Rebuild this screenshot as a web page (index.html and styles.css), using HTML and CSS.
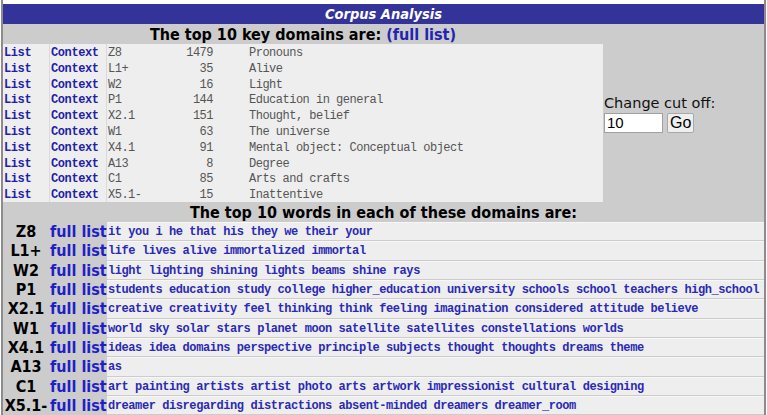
FILE: index.html
```html
<!DOCTYPE html>
<html lang="en">
<head>
<meta charset="utf-8">
<title>Corpus Analysis</title>
<link rel="stylesheet" href="styles.css">
</head>
<body>
<div class="frame">
  <div class="titlebar">Corpus Analysis</div>
  <div class="content">
    <div class="top">
      <div class="domains">
        <div class="heading first">The top 10 key domains are: <a href="#" class="hlink">(full list)</a></div>
        <div class="dtable">
          <a class="lnk c1" href="#">List</a><a class="lnk c2" href="#">Context</a><span class="c3">Z8</span><span class="num">1479</span><span class="desc">Pronouns</span>
          <a class="lnk c1" href="#">List</a><a class="lnk c2" href="#">Context</a><span class="c3">L1+</span><span class="num">35</span><span class="desc">Alive</span>
          <a class="lnk c1" href="#">List</a><a class="lnk c2" href="#">Context</a><span class="c3">W2</span><span class="num">16</span><span class="desc">Light</span>
          <a class="lnk c1" href="#">List</a><a class="lnk c2" href="#">Context</a><span class="c3">P1</span><span class="num">144</span><span class="desc">Education in general</span>
          <a class="lnk c1" href="#">List</a><a class="lnk c2" href="#">Context</a><span class="c3">X2.1</span><span class="num">151</span><span class="desc">Thought, belief</span>
          <a class="lnk c1" href="#">List</a><a class="lnk c2" href="#">Context</a><span class="c3">W1</span><span class="num">63</span><span class="desc">The universe</span>
          <a class="lnk c1" href="#">List</a><a class="lnk c2" href="#">Context</a><span class="c3">X4.1</span><span class="num">91</span><span class="desc">Mental object: Conceptual object</span>
          <a class="lnk c1" href="#">List</a><a class="lnk c2" href="#">Context</a><span class="c3">A13</span><span class="num">8</span><span class="desc">Degree</span>
          <a class="lnk c1" href="#">List</a><a class="lnk c2" href="#">Context</a><span class="c3">C1</span><span class="num">85</span><span class="desc">Arts and crafts</span>
          <a class="lnk c1" href="#">List</a><a class="lnk c2" href="#">Context</a><span class="c3">X5.1-</span><span class="num">15</span><span class="desc">Inattentive</span>
        </div>
      </div>
      <div class="cutoff">
        <form class="cutform">
          <div class="cutlabel">Change cut off:</div>
          <div class="cutrow"><input class="cutinput" type="text" value="10"><button class="gobtn" type="button">Go</button></div>
        </form>
      </div>
    </div>
    <div class="heading wide">The top 10 words in each of these domains are:</div>
    <div class="wtable">
      <span class="code">Z8</span><a class="full" href="#">full list</a><span class="words">it you i he that his they we their your</span>
      <span class="code">L1+</span><a class="full" href="#">full list</a><span class="words">life lives alive immortalized immortal</span>
      <span class="code">W2</span><a class="full" href="#">full list</a><span class="words">light lighting shining lights beams shine rays</span>
      <span class="code">P1</span><a class="full" href="#">full list</a><span class="words">students education study college higher_education university schools school teachers high_school</span>
      <span class="code">X2.1</span><a class="full" href="#">full list</a><span class="words">creative creativity feel thinking think feeling imagination considered attitude believe</span>
      <span class="code">W1</span><a class="full" href="#">full list</a><span class="words">world sky solar stars planet moon satellite satellites constellations worlds</span>
      <span class="code">X4.1</span><a class="full" href="#">full list</a><span class="words">ideas idea domains perspective principle subjects thought thoughts dreams theme</span>
      <span class="code">A13</span><a class="full" href="#">full list</a><span class="words">as</span>
      <span class="code">C1</span><a class="full" href="#">full list</a><span class="words">art painting artists artist photo arts artwork impressionist cultural designing</span>
      <span class="code">X5.1-</span><a class="full" href="#">full list</a><span class="words">dreamer disregarding distractions absent-minded dreamers dreamer_room</span>
    </div>
  </div>
</div>
</body>
</html>
```

FILE: styles.css
```css
html, body {
  margin: 0;
  padding: 0;
  background: #ffffff;
}

body {
  font-family: "DejaVu Sans Condensed", "DejaVu Sans", sans-serif;
  color: #000;
}

a {
  text-decoration: none;
}

.frame {
  margin: 0 1px;
  padding-top: 4px;
  border-left: 2px solid #8c8c8c;
  border-right: 2px solid #8c8c8c;
  height: 411px;
  overflow: hidden;
}

.titlebar {
  height: 20px;
  line-height: 21px;
  background: #333399;
  color: #ffffff;
  text-align: center;
  font-weight: bold;
  font-style: italic;
  font-size: 14.5px;
}

.content {
  background: #cccccc;
  height: 391px;
}

.top {
  display: flex;
}

.domains {
  width: 600px;
}

.heading {
  height: 19px;
  line-height: 21px;
  text-align: center;
  font-weight: bold;
  font-size: 16px;
  color: #000;
}

.heading.first {
  height: 20px;
}

.hlink {
  color: #2323b4;
}

.dtable {
  display: grid;
  grid-template-columns: 46px 57px 62px 46px 1fr;
  grid-auto-rows: 15.8px;
  background: #eeeeee;
  font-family: "Liberation Mono", "DejaVu Sans Mono", monospace;
  font-size: 12px;
  line-height: 17px;
  letter-spacing: -0.5px;
  color: #555555;
}

.dtable > * {
  white-space: nowrap;
  padding-left: 1px;
  padding-top: 1px;
  box-sizing: border-box;
}

.lnk {
  color: #1f1fa8;
  font-weight: bold;
  letter-spacing: -0.4px;
}

.c2, .c3 {
  border-left: 1px solid #dadada;
}

.num {
  text-align: right;
  padding-right: 1px;
}

.desc {
  padding-left: 35px !important;
}

.cutoff {
  flex: 1;
  display: flex;
  align-items: center;
  padding-left: 1px;
  padding-top: 2px;
}

.cutform {
  margin: 0;
}

.cutlabel {
  font-family: "DejaVu Sans", sans-serif;
  font-size: 14.5px;
  line-height: 17px;
  color: #111;
}

.cutrow {
  display: flex;
  gap: 4px;
  margin-top: 1px;
}

.cutinput {
  box-sizing: border-box;
  width: 59px;
  height: 20px;
  margin: 0;
  padding: 0 2px;
  border: 1px solid #a0a0a0;
  background: #fff;
  font-family: "Liberation Sans", Arial, sans-serif;
  font-size: 15px;
  color: #000;
}

.gobtn {
  box-sizing: border-box;
  height: 20px;
  margin: 0;
  padding: 0 2px;
  border: 1px solid #a8a8a8;
  border-radius: 2px;
  background: #efefef;
  font-family: "Liberation Sans", Arial, sans-serif;
  font-size: 16px;
  line-height: 18px;
  color: #000;
}

.wide {
  height: 19px;
}

.wtable {
  display: grid;
  grid-template-columns: 46px 58px 1fr;
  grid-auto-rows: 18.35px;
  row-gap: 1px;
  margin-top: 1px;
}

.code {
  text-align: center;
  font-weight: bold;
  font-size: 16px;
  line-height: 20px;
  color: #000;
  white-space: nowrap;
}

.full {
  font-weight: bold;
  font-size: 16px;
  line-height: 20px;
  color: #1f1fc8;
  white-space: nowrap;
  padding-left: 1px;
}

.words {
  background: #eeeeee;
  border-top: 1px solid #f7f7f7;
  font-family: "Liberation Mono", "DejaVu Sans Mono", monospace;
  font-weight: bold;
  font-size: 12px;
  line-height: 19px;
  letter-spacing: -0.42px;
  color: #2a2ab4;
  white-space: nowrap;
  overflow: hidden;
  padding-left: 1px;
}
```
